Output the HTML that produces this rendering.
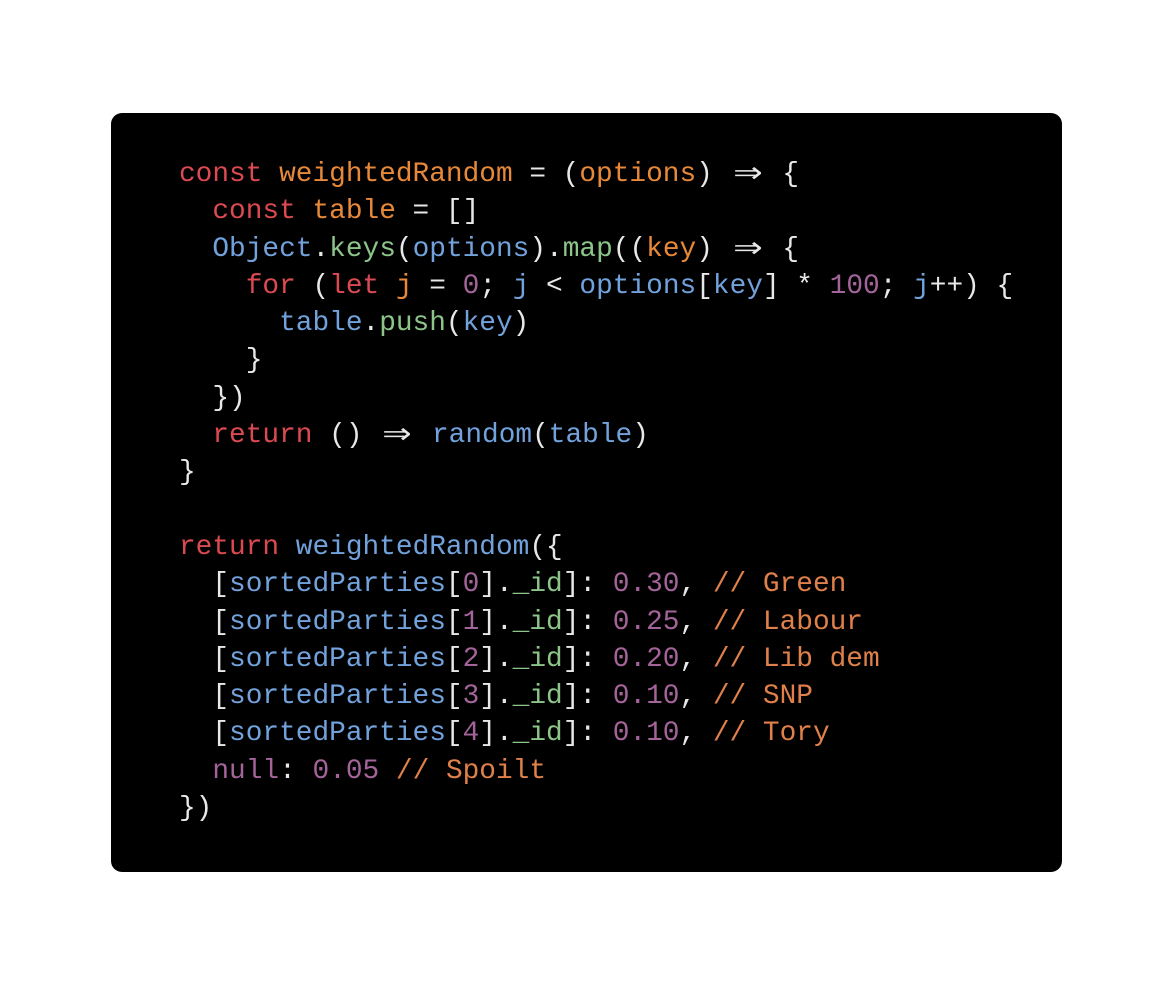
<!DOCTYPE html>
<html><head><meta charset="utf-8"><style>
html,body{margin:0;padding:0;background:#fff;width:1174px;height:986px;overflow:hidden}
.box{position:absolute;left:111px;top:113px;width:951px;height:759px;background:#000;border-radius:11px}
pre{position:absolute;left:179px;top:156px;margin:0;font-family:"Liberation Mono",monospace;font-size:27.8px;line-height:37.3px;color:#e8e8e8}
.r{color:#db4a52}.o{color:#e8893a}.b{color:#72a2dc}.g{color:#8cc48a}.p{color:#a4649a}.c{color:#e0804a}
.a{display:inline-block;width:2ch;text-align:center;font-family:"DejaVu Sans Mono",monospace;font-size:30px;line-height:1;transform:scale(1.6,1.25)}
</style></head><body>
<div class="box"></div>
<pre><span class="r">const</span> <span class="o">weightedRandom</span> = (<span class="o">options</span>) <span class="a">⇒</span> {
  <span class="r">const</span> <span class="o">table</span> = []
  <span class="b">Object</span>.<span class="g">keys</span>(<span class="b">options</span>).<span class="g">map</span>((<span class="o">key</span>) <span class="a">⇒</span> {
    <span class="r">for</span> (<span class="r">let</span> <span class="o">j</span> = <span class="p">0</span>; <span class="b">j</span> &lt; <span class="b">options</span>[<span class="b">key</span>] * <span class="p">100</span>; <span class="b">j</span>++) {
      <span class="b">table</span>.<span class="g">push</span>(<span class="b">key</span>)
    }
  })
  <span class="r">return</span> () <span class="a">⇒</span> <span class="b">random</span>(<span class="b">table</span>)
}

<span class="r">return</span> <span class="b">weightedRandom</span>({
  [<span class="b">sortedParties</span>[<span class="p">0</span>].<span class="g">_id</span>]: <span class="p">0.30</span>, <span class="c">// Green</span>
  [<span class="b">sortedParties</span>[<span class="p">1</span>].<span class="g">_id</span>]: <span class="p">0.25</span>, <span class="c">// Labour</span>
  [<span class="b">sortedParties</span>[<span class="p">2</span>].<span class="g">_id</span>]: <span class="p">0.20</span>, <span class="c">// Lib dem</span>
  [<span class="b">sortedParties</span>[<span class="p">3</span>].<span class="g">_id</span>]: <span class="p">0.10</span>, <span class="c">// SNP</span>
  [<span class="b">sortedParties</span>[<span class="p">4</span>].<span class="g">_id</span>]: <span class="p">0.10</span>, <span class="c">// Tory</span>
  <span class="p">null</span>: <span class="p">0.05</span> <span class="c">// Spoilt</span>
})</pre>
</body></html>
